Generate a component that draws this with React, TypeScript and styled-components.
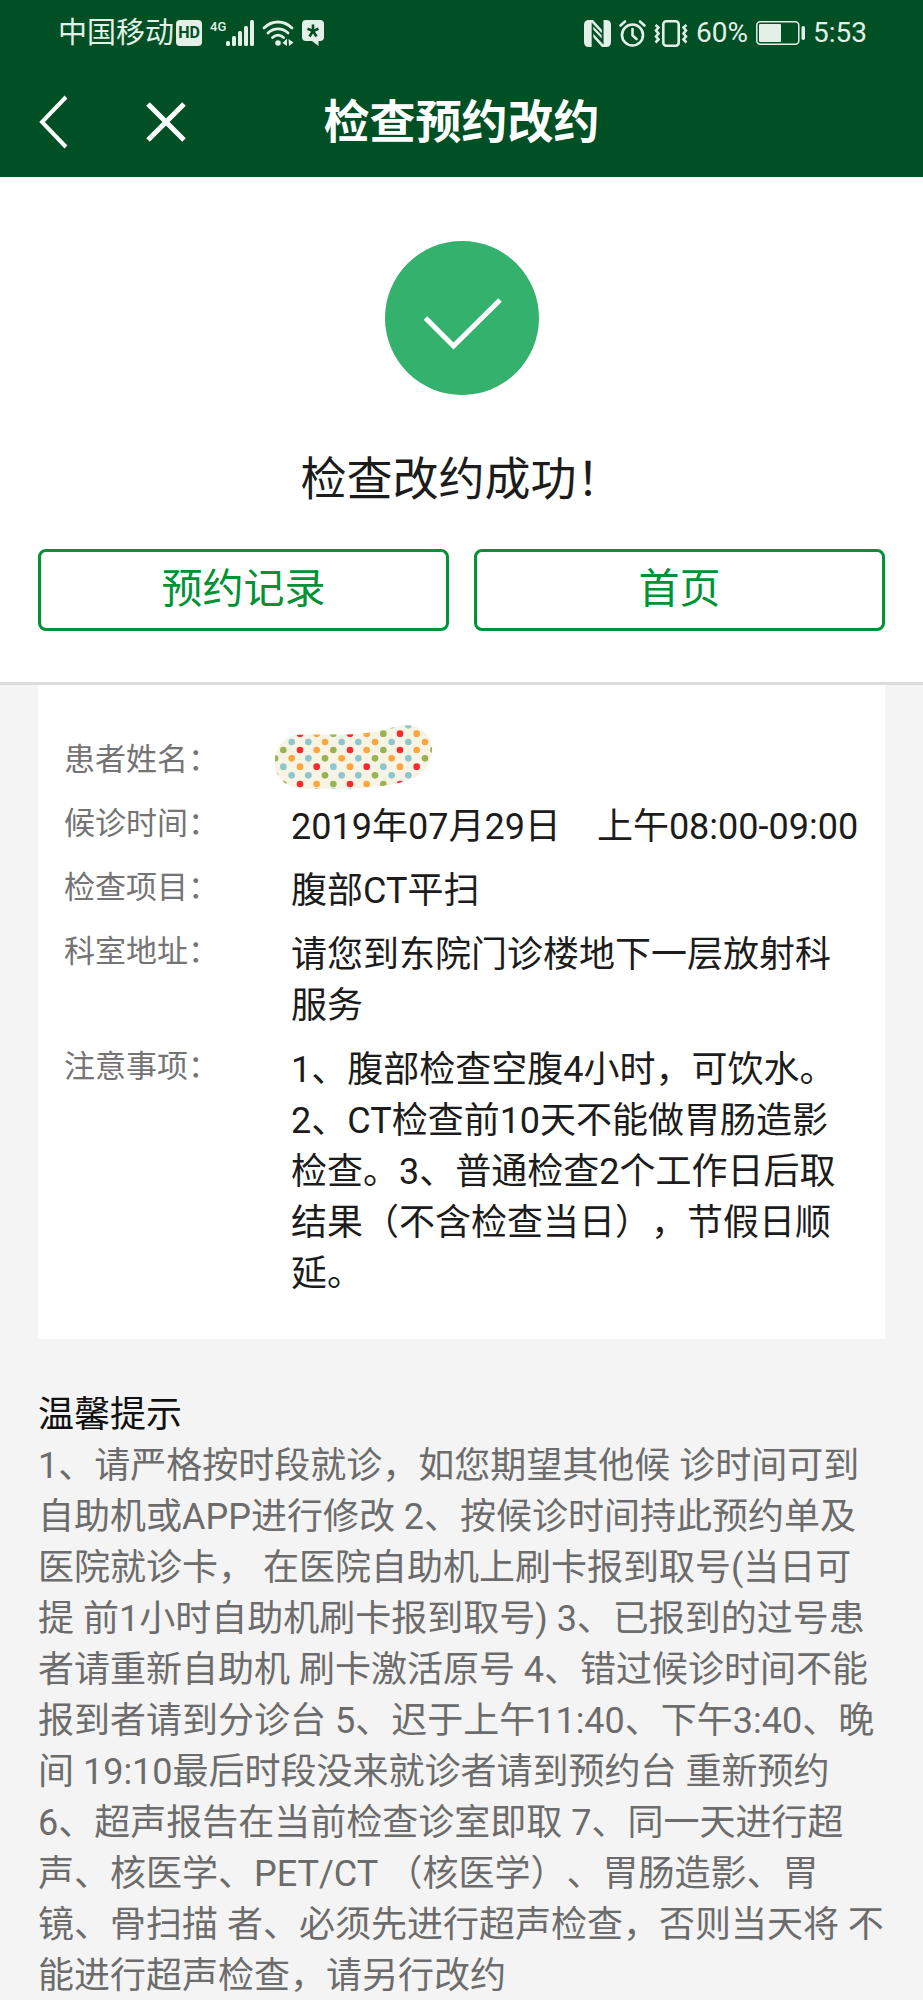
import React from 'react';
import styled, { createGlobalStyle } from 'styled-components';

const latinCjk = "Roboto, 'Noto Sans CJK SC', sans-serif";

const GlobalStyle = createGlobalStyle`
  * { box-sizing: border-box; }
  body {
    margin: 0;
    background: #f4f4f4;
    color: #1c1c1c;
    font-family: ${latinCjk};
    text-spacing-trim: space-all;
    text-autospace: no-autospace;
  }
  h1, h2, p, dl, dd { margin: 0; }
`;

const Header = styled.header`
  background: #004f25;
  color: #fff;
`;

const StatusBar = styled.div`
  display: flex;
  justify-content: space-between;
  align-items: center;
  height: 66px;
  padding: 0 56px 0 58px;
  color: #e4efe8;
  font-size: 28px;
  line-height: 36px;
`;

const StatusGroup = styled.div`
  display: flex;
  align-items: center;
  gap: 8px;
`;

const Carrier = styled.span`
  font-size: 29px;
  margin-right: -6px;
`;

const HdBadge = styled.span`
  width: 26px;
  height: 26px;
  border-radius: 4px;
  background: #e4efe8;
  color: #004f25;
  font-size: 16px;
  font-weight: 700;
  line-height: 26px;
  text-align: center;
`;

const Signal = styled.span`
  display: flex;
  align-items: flex-start;
`;

const NetworkType = styled.span`
  font-size: 13px;
  font-weight: 500;
  line-height: 13px;
`;

const NavBar = styled.nav`
  display: grid;
  grid-template-columns: 1fr auto 1fr;
  align-items: center;
  height: 111px;
  padding: 0 32px;
`;

const NavActions = styled.div`
  display: flex;
  gap: 68px;
`;

const IconButton = styled.button`
  display: flex;
  align-items: center;
  justify-content: center;
  width: 44px;
  height: 56px;
  padding: 0;
  border: 0;
  background: none;
  color: inherit;
`;

const NavTitle = styled.h1`
  font-size: 46px;
  font-weight: 700;
  line-height: 60px;
`;

const Result = styled.section`
  display: flex;
  flex-direction: column;
  align-items: center;
  padding: 64px 38px 51px;
  border-bottom: 3px solid #dcdcdc;
  background: #fff;
`;

const ResultTitle = styled.h2`
  margin: 50px 0 36px;
  font-size: 46px;
  font-weight: 400;
  line-height: 68px;
`;

const Actions = styled.div`
  display: grid;
  grid-template-columns: 1fr 1fr;
  gap: 25px;
  width: 100%;
`;

const ActionButton = styled.button`
  height: 82px;
  padding: 0 0 2px;
  border: 3px solid #009234;
  border-radius: 8px;
  background: #fff;
  color: #009234;
  font-family: inherit;
  font-size: 41px;
  line-height: 60px;
`;

const Card = styled.dl`
  display: flex;
  flex-direction: column;
  gap: 13px;
  margin: 0 38px;
  padding: 53px 26px 39px;
  background: #fff;
`;

const Row = styled.div`
  display: grid;
  grid-template-columns: 227px 1fr;
`;

const Label = styled.dt`
  color: #747474;
  font-size: 31px;
  line-height: 44px;
`;

const Value = styled.dd`
  position: relative;
  min-height: 51px;
  font-size: 36px;
  line-height: 51px;
`;

const Sticker = styled.svg`
  position: absolute;
  left: -17px;
  top: -14px;
`;

const Period = styled.span`
  margin-left: 36px;
`;

const Tips = styled.section`
  padding: 51px 38px 0;
  font-size: 36px;
  line-height: 51px;
`;

const TipsTitle = styled.h2`
  color: #111;
  font-size: inherit;
  font-weight: 400;
`;

const TipsText = styled.p`
  color: #6c6c6c;
`;

const dotColors: Record<string, string> = {
  R: '#f42a2c',
  O: '#fba63f',
  G: '#98b352',
  B: '#8dc6cc',
};

const dotRows = [
  { y: 30, x: 425, dots: 'BB' },
  { y: 55, x: 150, dots: 'ROGROGRO' },
  { y: 80, x: 125, dots: 'BBOBBOBBO' },
  { y: 104, x: 100, dots: 'GROGROGROG' },
  { y: 129, x: 75, dots: 'GOBGOBGOBG' },
  { y: 154, x: 100, dots: 'BORBORBOR' },
  { y: 180, x: 75, dots: 'GBBGBBGBB' },
  { y: 206, x: 100, dots: 'GROGROGR' },
  { y: 229, x: 200, dots: 'OBB' },
];

function NameSticker() {
  return (
    <Sticker width="160" height="66" viewBox="72 26 480 198" aria-hidden="true">
      <clipPath id="blob">
        <path d="M75 134C76 96 104 60 148 58C200 56 260 59 310 57C350 55 400 42 440 34C460 28 490 26 512 41C536 56 547 80 546 104C544 142 520 180 484 192C450 204 410 212 372 215C320 223 250 220 190 221C150 222 120 218 98 198C80 180 75 160 75 134Z" />
      </clipPath>
      <g clipPath="url(#blob)">
        <rect x="70" y="20" width="490" height="210" fill="#f7f3e5" />
        {dotRows.map((row) =>
          row.dots.split('').map((c, i) => (
            <circle key={`${row.y}-${i}`} cx={row.x + i * 50} cy={row.y} r="10" fill={dotColors[c]} />
          )),
        )}
      </g>
    </Sticker>
  );
}

function SignalBars() {
  return (
    <svg width="28" height="26" viewBox="0 0 28 26" fill="currentColor">
      <rect x="0" y="21" width="4" height="5" rx="1.5" />
      <rect x="6" y="16" width="4" height="10" rx="1.5" />
      <rect x="12" y="11" width="4" height="15" rx="1.5" />
      <rect x="18" y="6" width="4" height="20" rx="1.5" />
      <rect x="24" y="0" width="4" height="26" rx="1.5" />
    </svg>
  );
}

function WifiIcon() {
  return (
    <svg width="32" height="26" viewBox="0 0 32 26" fill="none" stroke="currentColor" strokeWidth="2.8" strokeLinecap="round">
      <path d="M2 8C10 0 22 0 30 8" />
      <path d="M6 13C12 7.500 20 7.500 26 13" />
      <path d="M10.500 17.500C14 14.500 18 14.500 21.500 17.500" />
      <circle cx="16" cy="23" r="2.800" fill="currentColor" stroke="none" />
      <path d="M20.500 23L25 18.500V26ZM26.500 19L31.500 22.500L27 26Z" fill="currentColor" stroke="none" />
    </svg>
  );
}

function StarBubble() {
  return (
    <svg width="22" height="26" viewBox="0 0 22 26">
      <path d="M4 0H18Q22 0 22 4V17Q22 21 18 21H16.500V26L10 21H4Q0 21 0 17V4Q0 0 4 0Z" fill="currentColor" />
      <path d="M11 11V4.500M11 11L5.500 8.800M11 11L16.500 8.800M11 11L7.500 16.500M11 11L14.500 16.500" stroke="#004f25" strokeWidth="2.600" />
    </svg>
  );
}

function NfcIcon() {
  return (
    <svg width="27" height="27" viewBox="0 0 27 27">
      <path d="M5 0H9L19 11V0H22Q27 0 27 5V22Q27 27 22 27H18L8 16V27H5Q0 27 0 22V5Q0 0 5 0Z" fill="currentColor" />
      <path d="M8.500 27V4.500L18.500 15V20.500L8.500 10M18.700 0V22.500L8.700 12" fill="none" stroke="#004f25" strokeWidth="1.700" />
    </svg>
  );
}

function AlarmIcon() {
  return (
    <svg width="27" height="27" viewBox="0 0 27 27" fill="none" stroke="currentColor" strokeWidth="2.600" strokeLinecap="round">
      <circle cx="13.500" cy="15" r="10.500" />
      <path d="M13.500 9V15.500L17.500 19M1.500 5.500L6 1.500M25.500 5.500L21 1.500" />
    </svg>
  );
}

function VibrateIcon() {
  return (
    <svg width="34" height="27" viewBox="0 0 34 27" fill="none" stroke="currentColor" strokeWidth="2.600">
      <rect x="9.300" y="1.300" width="15.400" height="24.400" rx="3" />
      <path d="M1.500 5L4.500 7.500L2 10.500L4.500 13.500L2 16.500L4.500 19.500L1.500 22.500M32.500 5L29.500 7.500L32 10.500L29.500 13.500L32 16.500L29.500 19.500L32.500 22.500" />
    </svg>
  );
}

function BatteryIcon() {
  return (
    <svg width="49" height="24" viewBox="0 0 49 24">
      <rect x="0.800" y="0.800" width="42" height="22.400" rx="3.500" fill="none" stroke="currentColor" strokeWidth="1.500" />
      <rect x="3" y="3" width="22" height="18" rx="1" fill="currentColor" />
      <rect x="45.500" y="5" width="3.500" height="14" rx="1.700" fill="currentColor" />
    </svg>
  );
}

export default function App() {
  return (
    <>
      <GlobalStyle />
      <Header>
        <StatusBar>
          <StatusGroup>
            <Carrier>中国移动</Carrier>
            <HdBadge>HD</HdBadge>
            <Signal>
              <NetworkType>4G</NetworkType>
              <SignalBars />
            </Signal>
            <WifiIcon />
            <StarBubble />
          </StatusGroup>
          <StatusGroup>
            <NfcIcon />
            <AlarmIcon />
            <VibrateIcon />
            <span>60%</span>
            <BatteryIcon />
            <span>5:53</span>
          </StatusGroup>
        </StatusBar>
        <NavBar>
          <NavActions>
            <IconButton aria-label="返回">
              <svg width="32" height="54" viewBox="0 0 32 54" fill="none" stroke="currentColor" strokeWidth="4">
                <path d="M28 2L4 27L28 52" />
              </svg>
            </IconButton>
            <IconButton aria-label="关闭">
              <svg width="40" height="40" viewBox="0 0 40 40" fill="none" stroke="currentColor" strokeWidth="5">
                <path d="M2 2L38 38M38 2L2 38" />
              </svg>
            </IconButton>
          </NavActions>
          <NavTitle>检查预约改约</NavTitle>
        </NavBar>
      </Header>

      <main>
        <Result>
          <svg width="154" height="154" viewBox="0 0 154 154" aria-hidden="true">
            <circle cx="77" cy="77" r="77" fill="#34b16d" />
            <path d="M40.500 77L68.500 105L115 59" fill="none" stroke="#fff" strokeWidth="5" />
          </svg>
          <ResultTitle>检查改约成功！</ResultTitle>
          <Actions>
            <ActionButton>预约记录</ActionButton>
            <ActionButton>首页</ActionButton>
          </Actions>
        </Result>

        <Card>
          <Row>
            <Label>患者姓名：</Label>
            <Value>
              <NameSticker />
            </Value>
          </Row>
          <Row>
            <Label>候诊时间：</Label>
            <Value>
              2019年07月29日<Period>上午08:00-09:00</Period>
            </Value>
          </Row>
          <Row>
            <Label>检查项目：</Label>
            <Value>腹部CT平扫</Value>
          </Row>
          <Row>
            <Label>科室地址：</Label>
            <Value>请您到东院门诊楼地下一层放射科服务</Value>
          </Row>
          <Row>
            <Label>注意事项：</Label>
            <Value>
              1、腹部检查空腹4小时，可饮水。2、CT检查前10天不能做胃肠造影检查。3、普通检查2个工作日后取结果（不含检查当日），节假日顺延。
            </Value>
          </Row>
        </Card>

        <Tips>
          <TipsTitle>温馨提示</TipsTitle>
          <TipsText>
            1、请严格按时段就诊，如您期望其他候 诊时间可到自助机或APP进行修改 2、按候诊时间持此预约单及医院就诊卡， 在医院自助机上刷卡报到取号(当日可提
            前1小时自助机刷卡报到取号) 3、已报到的过号患者请重新自助机 刷卡激活原号 4、错过候诊时间不能报到者请到分诊台
            5、迟于上午11:40、下午3:40、晚间 19:10最后时段没来就诊者请到预约台 重新预约 6、超声报告在当前检查诊室即取
            7、同一天进行超声、核医学、PET/CT （核医学）、胃肠造影、胃镜、骨扫描 者、必须先进行超声检查，否则当天将 不能进行超声检查，请另行改约
          </TipsText>
        </Tips>
      </main>
    </>
  );
}
